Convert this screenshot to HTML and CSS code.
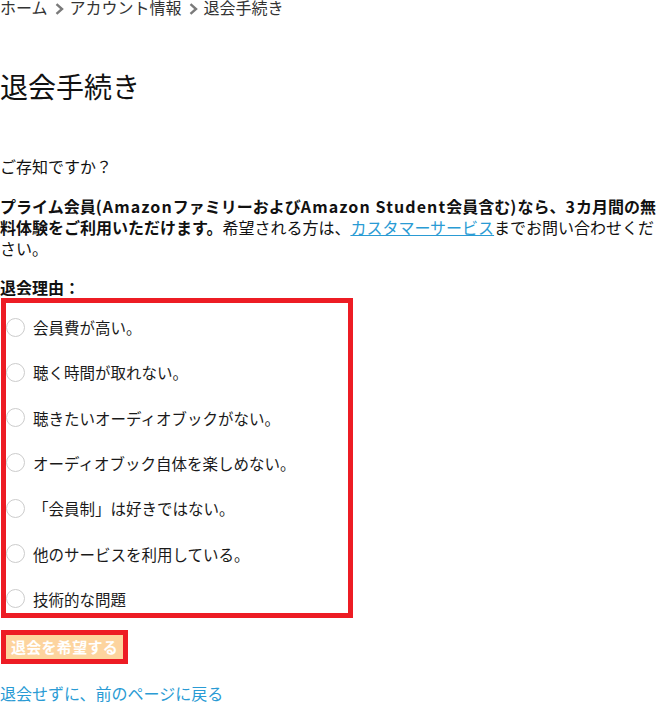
FILE: index.html
```html
<!DOCTYPE html>
<html lang="ja">
<head>
<meta charset="utf-8">
<title>退会手続き</title>
<link rel="stylesheet" href="styles.css">
</head>
<body>
<div class="page">
  <nav class="breadcrumb">
    <a class="crumb" href="#">ホーム</a>
    <svg class="chev" width="9" height="12" viewBox="0 0 9 12"><path d="M1.5 1.2 L7 6 L1.5 10.8" fill="none" stroke="#7a7a7a" stroke-width="2.4"/></svg>
    <a class="crumb" href="#">アカウント情報</a>
    <svg class="chev" width="9" height="12" viewBox="0 0 9 12"><path d="M1.5 1.2 L7 6 L1.5 10.8" fill="none" stroke="#7a7a7a" stroke-width="2.4"/></svg>
    <span class="crumb">退会手続き</span>
  </nav>

  <h1 class="title">退会手続き</h1>

  <p class="lead">ご存知ですか？</p>

  <p class="info"><strong>プライム会員<span class="en">(Amazon</span>ファミリーおよび<span class="en">Amazon Student</span>会員含む<span class="en">)</span>なら、<span class="en">3</span>カ月間の無料体験をご利用いただけます。</strong>希望される方は、<a class="link" href="#">カスタマーサービス</a>までお問い合わせください。</p>

  <p class="reason-title">退会理由：</p>

  <div class="reasons">
    <label class="reason"><input type="radio" name="reason" class="radio"><span>会員費が高い。</span></label>
    <label class="reason"><input type="radio" name="reason" class="radio"><span>聴く時間が取れない。</span></label>
    <label class="reason"><input type="radio" name="reason" class="radio"><span>聴きたいオーディオブックがない。</span></label>
    <label class="reason"><input type="radio" name="reason" class="radio"><span>オーディオブック自体を楽しめない。</span></label>
    <label class="reason"><input type="radio" name="reason" class="radio"><span>「会員制」は好きではない。</span></label>
    <label class="reason"><input type="radio" name="reason" class="radio"><span>他のサービスを利用している。</span></label>
    <label class="reason"><input type="radio" name="reason" class="radio"><span>技術的な問題</span></label>
  </div>

  <div class="submit-wrap">
    <button class="submit" type="button" disabled>退会を希望する</button>
  </div>

  <a class="back" href="#">退会せずに、前のページに戻る</a>
</div>
</body>
</html>
```

FILE: styles.css
```css
html, body {
  margin: 0;
  padding: 0;
  background: #ffffff;
}

body {
  font-family: "Noto Sans CJK JP", "Noto Sans", sans-serif;
  color: #111111;
  font-size: 16px;
}

.page {
  width: 660px;
  display: flex;
  flex-direction: column;
  align-items: flex-start;
}

.breadcrumb {
  display: flex;
  align-items: flex-start;
  height: 16px;
  line-height: 16px;
  font-size: 16px;
  margin-top: -1px;
}

.crumb {
  color: #333333;
  text-decoration: none;
}

.chev {
  margin: 4px 6px 0 7px;
  flex: none;
}

.title {
  font-size: 28px;
  font-weight: normal;
  line-height: 40px;
  margin: 51px 0 0 0;
  color: #111111;
}

.lead {
  margin: 50px 0 0 0;
  line-height: 21px;
}

.info {
  margin: 19px 0 0 0;
  line-height: 21px;
  width: 660px;
}

.info strong {
  font-weight: bold;
}

.en {
  letter-spacing: 1.1px;
}

.link {
  color: #2a9bd4;
  text-decoration: underline;
}

.reason-title {
  margin: 18px 0 0 0;
  line-height: 21px;
  font-weight: bold;
}

.reasons {
  margin: 0 0 0 1px;
  width: 352px;
  box-sizing: border-box;
  border: 5px solid #ed1c24;
  padding: 12px 0 2px 0;
  display: flex;
  flex-direction: column;
  gap: 21.33px;
}

.reason {
  display: flex;
  align-items: center;
  height: 24px;
  font-size: 15.5px;
  color: #1a1a1a;
}

.radio {
  appearance: none;
  -webkit-appearance: none;
  width: 19px;
  height: 19px;
  margin: 0 8px 0 0;
  border: 1px solid #cccccc;
  border-radius: 50%;
  background: #ffffff;
  box-sizing: border-box;
  flex: none;
}

.submit-wrap {
  margin: 12px 0 0 1px;
  border: 5px solid #ed1c24;
  display: flex;
}

.submit {
  font-family: "Noto Sans CJK JP", "Noto Sans", sans-serif;
  font-size: 15px;
  font-weight: bold;
  line-height: 24px;
  height: 24px;
  width: 117px;
  padding: 0;
  border: none;
  background: #fdd49e;
  color: #ffffff;
  text-align: center;
  letter-spacing: 0.3px;
}

.back {
  margin: 19px 0 0 0;
  line-height: 21px;
  color: #2a9bd4;
  text-decoration: none;
}
```
